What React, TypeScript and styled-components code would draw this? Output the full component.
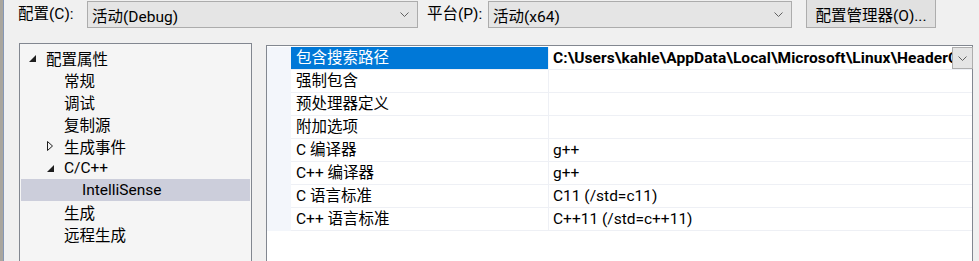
import React from "react";
import styled, { createGlobalStyle } from "styled-components";

const GlobalStyle = createGlobalStyle`
  html, body {
    margin: 0;
    padding: 0;
    background: #f0f0f0;
  }
  body {
    font-family: "Segoe UI", Roboto, "Noto Sans CJK SC", sans-serif;
    font-size: 15.5px;
    color: #000;
  }
`;

const Window = styled.div`
  display: flex;
  width: 979px;
  height: 261px;
  overflow: hidden;
  background: #f0f0f0;
`;

const Edge = styled.div`
  width: 3px;
  background: #aaa69e;
  border-right: 1px solid #8597b6;
  flex-shrink: 0;
`;

const Body = styled.div`
  flex: 1;
  display: flex;
  flex-direction: column;
`;

const Toolbar = styled.div`
  display: flex;
  align-items: center;
  height: 30px;
  padding-left: 14px;
`;

const Label = styled.span<{ $w: number }>`
  width: ${(p) => p.$w}px;
  flex-shrink: 0;
  line-height: 28px;
  white-space: nowrap;
`;

const Combo = styled.div<{ $w: number }>`
  box-sizing: border-box;
  width: ${(p) => p.$w}px;
  height: 27px;
  margin-right: ${(p) => (p.$w > 320 ? 9 : 14)}px;
  display: flex;
  align-items: center;
  justify-content: space-between;
  padding: 1px 8px 0 4px;
  background: #e5e5e5;
  border: 1px solid #acacac;
  white-space: nowrap;
`;

const Button = styled.button`
  box-sizing: border-box;
  width: 130px;
  height: 29px;
  margin-top: -1px;
  padding: 1px 0 0;
  background: #e1e1e1;
  border: 1px solid #adadad;
  font: inherit;
  color: #000;
  white-space: nowrap;
`;

const Main = styled.div`
  display: flex;
  align-items: flex-start;
  padding-top: 15px;
  padding-left: 15px;
  gap: 14px;
`;

const Tree = styled.div`
  box-sizing: border-box;
  width: 233px;
  height: 240px;
  padding-top: 3px;
  background: #f5f5f5;
  border: 1px solid #828790;
`;

const TreeRow = styled.div<{ $level: number; $selected?: boolean }>`
  display: flex;
  align-items: center;
  height: 22px;
  margin: 0 1px;
  padding-left: ${(p) => 8 + p.$level * 18}px;
  background: ${(p) => (p.$selected ? "#cccedb" : "transparent")};
  white-space: nowrap;
`;

const Toggle = styled.span`
  width: 17px;
  height: 22px;
  display: flex;
  align-items: center;
  flex-shrink: 0;
`;

const Grid = styled.div`
  box-sizing: border-box;
  width: 707px;
  height: 240px;
  margin-top: 2px;
  padding-top: 1px;
  background: #fff;
  border: 1px solid #828790;
`;

const PropRow = styled.div`
  display: grid;
  grid-template-columns: 24px 258px 1fr;
  height: 23px;
`;

const Gutter = styled.div`
  background: #f3f6fb;
`;

const NameCell = styled.div<{ $selected?: boolean }>`
  padding: 1px 0 0 5px;
  line-height: 21px;
  background: ${(p) => (p.$selected ? "#0078d7" : "#fff")};
  color: ${(p) => (p.$selected ? "#fff" : "#000")};
  border-bottom: 1px solid #eef0f5;
  border-right: 1px solid #eef0f5;
  white-space: nowrap;
`;

const ValueCell = styled.div<{ $bold?: boolean }>`
  display: flex;
  min-width: 0;
  padding: 1px 0 0 4px;
  line-height: 21px;
  font-weight: ${(p) => (p.$bold ? 700 : 400)};
  letter-spacing: ${(p) => (p.$bold ? "0.08px" : "0")};
  border-bottom: 1px solid #eef0f5;
  white-space: nowrap;
`;

const ValueText = styled.span`
  flex: 1;
  overflow: hidden;
`;

const DropButton = styled.span`
  box-sizing: border-box;
  width: 21px;
  height: 22px;
  margin: -1px -1px 0 0;
  display: flex;
  align-items: center;
  justify-content: center;
  background: #e5e5e5;
  border: 1px solid #adadad;
  flex-shrink: 0;
`;

const Chevron = () => (
  <svg width="9" height="5" viewBox="0 0 9 5">
    <path d="M0.5 0.5 L4.5 4.5 L8.5 0.5" fill="none" stroke="#606060" strokeWidth="1" />
  </svg>
);

const Expanded = () => (
  <svg width="7" height="7" viewBox="0 0 7 7">
    <path d="M7 0 L7 7 L0 7 Z" fill="#1e1e1e" />
  </svg>
);

const Collapsed = () => (
  <svg width="6" height="10" viewBox="0 0 6 10">
    <path d="M0.5 0.5 L5.5 5 L0.5 9.5 Z" fill="none" stroke="#1e1e1e" strokeWidth="1" />
  </svg>
);

type Node = { label: string; level: number; toggle?: "open" | "closed"; selected?: boolean };

const nodes: Node[] = [
  { label: "配置属性", level: 0, toggle: "open" },
  { label: "常规", level: 1 },
  { label: "调试", level: 1 },
  { label: "复制源", level: 1 },
  { label: "生成事件", level: 1, toggle: "closed" },
  { label: "C/C++", level: 1, toggle: "open" },
  { label: "IntelliSense", level: 2, selected: true },
  { label: "生成", level: 1 },
  { label: "远程生成", level: 1 },
];

const props = [
  { name: "包含搜索路径", value: "C:\\Users\\kahle\\AppData\\Local\\Microsoft\\Linux\\HeaderCache\\1.0\\", selected: true },
  { name: "强制包含", value: "" },
  { name: "预处理器定义", value: "" },
  { name: "附加选项", value: "" },
  { name: "C 编译器", value: "g++" },
  { name: "C++ 编译器", value: "g++" },
  { name: "C 语言标准", value: "C11 (/std=c11)" },
  { name: "C++ 语言标准", value: "C++11 (/std=c++11)" },
];

export default function App() {
  return (
    <>
      <GlobalStyle />
      <Window>
        <Edge />
        <Body>
          <Toolbar>
            <Label $w={69}>配置(C):</Label>
            <Combo $w={331}>
              <span>活动(Debug)</span>
              <Chevron />
            </Combo>
            <Label $w={61}>平台(P):</Label>
            <Combo $w={304}>
              <span>活动(x64)</span>
              <Chevron />
            </Combo>
            <Button>配置管理器(O)...</Button>
          </Toolbar>
          <Main>
            <Tree>
              {nodes.map((n) => (
                <TreeRow key={n.label} $level={n.level} $selected={n.selected}>
                  <Toggle>
                    {n.toggle === "open" && <Expanded />}
                    {n.toggle === "closed" && <Collapsed />}
                  </Toggle>
                  {n.label}
                </TreeRow>
              ))}
            </Tree>
            <Grid>
              {props.map((p) => (
                <PropRow key={p.name}>
                  <Gutter />
                  <NameCell $selected={p.selected}>{p.name}</NameCell>
                  <ValueCell $bold={p.selected}>
                    <ValueText>{p.value}</ValueText>
                    {p.selected && (
                      <DropButton>
                        <Chevron />
                      </DropButton>
                    )}
                  </ValueCell>
                </PropRow>
              ))}
            </Grid>
          </Main>
        </Body>
      </Window>
    </>
  );
}
